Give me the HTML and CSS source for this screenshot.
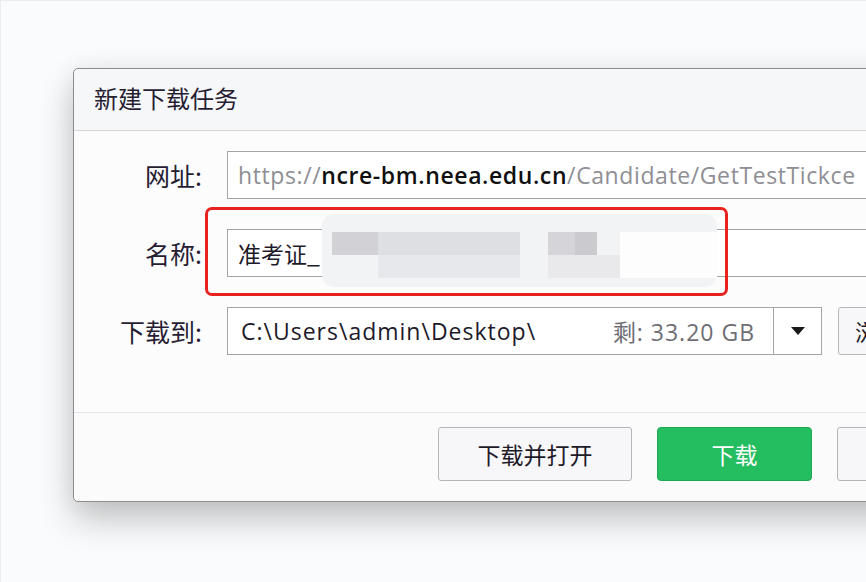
FILE: index.html
```html
<!DOCTYPE html>
<html lang="zh-CN">
  <head>
    <meta charset="UTF-8" />
    <meta name="viewport" content="width=device-width, initial-scale=1.0" />
    <title>新建下载任务</title>
    <link rel="stylesheet" href="styles.css">
  </head>
  <body>
    <div class="dialog">
      <div class="title">新建下载任务</div>
      <div class="form">
        <div class="row">
          <label class="label">网址:</label>
          <div class="input url">
            <span>https://<b>ncre-bm.neea.edu.cn</b>/Candidate/GetTestTickce</span>
          </div>
        </div>
        <div class="row">
          <label class="label">名称:</label>
          <div class="field">
            <div class="input name">准考证_</div>
            <div class="mark">
              <div class="mosaic">
                <span class="px a"></span><span class="px b"></span><span class="px c"></span>
                <span class="px d"></span><span class="px e"></span><span class="px g"></span>
                <span class="px f"></span>
              </div>
            </div>
          </div>
        </div>
        <div class="row">
          <label class="label">下载到:</label>
          <div class="input path">
            <span>C:\Users\admin\Desktop\</span>
            <span class="free">剩: 33.20 GB</span>
          </div>
          <div class="drop">
            <svg width="14" height="8" viewBox="0 0 14 8"><path d="M0 0h14L7 8z" fill="#1a1a1a"/></svg>
          </div>
          <button class="btn browse">浏</button>
        </div>
      </div>
      <div class="footer">
        <button class="btn">下载并打开</button>
        <button class="btn primary">下载</button>
        <button class="btn cancel"></button>
      </div>
    </div>
  </body>
</html>
```

FILE: styles.css
```css
body {
  margin: 0;
  height: 582px;
  overflow: hidden;
  background: #fafbfc;
  font-family: "Noto Sans CJK SC", "Noto Sans", sans-serif;
  color: #1e1a2a;
  border-top: 1px solid #ececee;
  border-left: 1px solid #ececee;
  box-sizing: border-box;
}

.dialog {
  margin: 67px 0 0 72px;
  width: 960px;
  background: #fcfcfd;
  border: 1px solid #8c8c90;
  border-radius: 5px;
  box-shadow: 0 18px 34px rgba(0, 0, 0, 0.22), 0 0 26px rgba(0, 0, 0, 0.06);
}

.title {
  height: 61px;
  line-height: 58px;
  padding-left: 20px;
  font-size: 24px;
  background: #f6f7f9;
  border-bottom: 1px solid #d6d6da;
  border-radius: 5px 5px 0 0;
  color: #261d33;
}

.form {
  display: flex;
  flex-direction: column;
  gap: 30px;
  padding: 20px 0 57px;
}

.row {
  display: flex;
  align-items: center;
  height: 48px;
}

.label {
  width: 128px;
  text-align: right;
  padding-right: 25px;
  font-size: 25px;
  color: #261d33;
}

.input {
  box-sizing: border-box;
  height: 48px;
  border: 1px solid #a4a4a8;
  background: #fff;
  padding: 0 10px;
  display: flex;
  align-items: center;
  font-size: 23px;
  white-space: nowrap;
  overflow: hidden;
}

.url {
  flex: 1;
  color: #8e8e94;
  font-family: "Open Sans", "Noto Sans", sans-serif;
  font-size: 23px;
  letter-spacing: 0.6px;
}
.url b {
  color: #101010;
  font-weight: 600;
}

.field {
  flex: 1;
  position: relative;
}
.name {
  width: 100%;
}

.mark {
  position: absolute;
  left: -22px;
  top: -22px;
  width: 523px;
  height: 89px;
  box-sizing: border-box;
  border: 3px solid #e8231f;
  border-radius: 7px;
}

.mosaic {
  position: absolute;
  left: 114px;
  top: 4px;
  width: 395px;
  height: 73px;
  background: #f2f3f5;
  border-radius: 12px;
  overflow: hidden;
}
.px {
  position: absolute;
}
.a { left: 10px; top: 18px; width: 46px; height: 23px; background: #d2d2d6; }
.b { left: 56px; top: 18px; width: 142px; height: 23px; background: #dedfe2; }
.c { left: 56px; top: 41px; width: 142px; height: 23px; background: #e7e8eb; }
.d { left: 226px; top: 18px; width: 27px; height: 23px; background: #d5d5d9; }
.e { left: 253px; top: 18px; width: 22px; height: 23px; background: #cbcbcf; }
.g { left: 226px; top: 41px; width: 72px; height: 23px; background: #e9e9ec; }
.f { left: 298px; top: 18px; width: 97px; height: 46px; background: #fdfdfe; }

.path {
  width: 547px;
  justify-content: space-between;
  font-family: "Open Sans", "Noto Sans", sans-serif;
  font-size: 23px;
  letter-spacing: 1px;
  color: #1e1a2a;
  padding: 0 18px 0 13px;
}
.free {
  color: #6e6e74;
}

.drop {
  box-sizing: border-box;
  width: 48px;
  height: 48px;
  border: 1px solid #a4a4a8;
  border-left: none;
  background: #fff;
  display: flex;
  align-items: center;
  justify-content: center;
}

.btn {
  box-sizing: border-box;
  height: 54px;
  width: 194px;
  font-family: "Noto Sans CJK SC", "Noto Sans", sans-serif;
  font-size: 23px;
  color: #1e1a2a;
  background: #f7f7f9;
  border: 1px solid #b6b6ba;
  border-radius: 3px;
}
.browse {
  height: 48px;
  width: 80px;
  margin-left: 16px;
  text-align: left;
  padding-left: 16px;
}

.footer {
  display: flex;
  gap: 25px;
  height: 89px;
  box-sizing: border-box;
  padding: 14px 0 0 364px;
  border-top: 1px solid #e6e6ea;
  background: #fbfbfc;
  border-radius: 0 0 5px 5px;
}
.footer .btn {
  flex: none;
}
.primary {
  width: 155px;
  background: #24bd5f;
  border-color: #1fa853;
  color: #fff;
  border-radius: 4px;
}
.cancel {
  width: 155px;
}
```
